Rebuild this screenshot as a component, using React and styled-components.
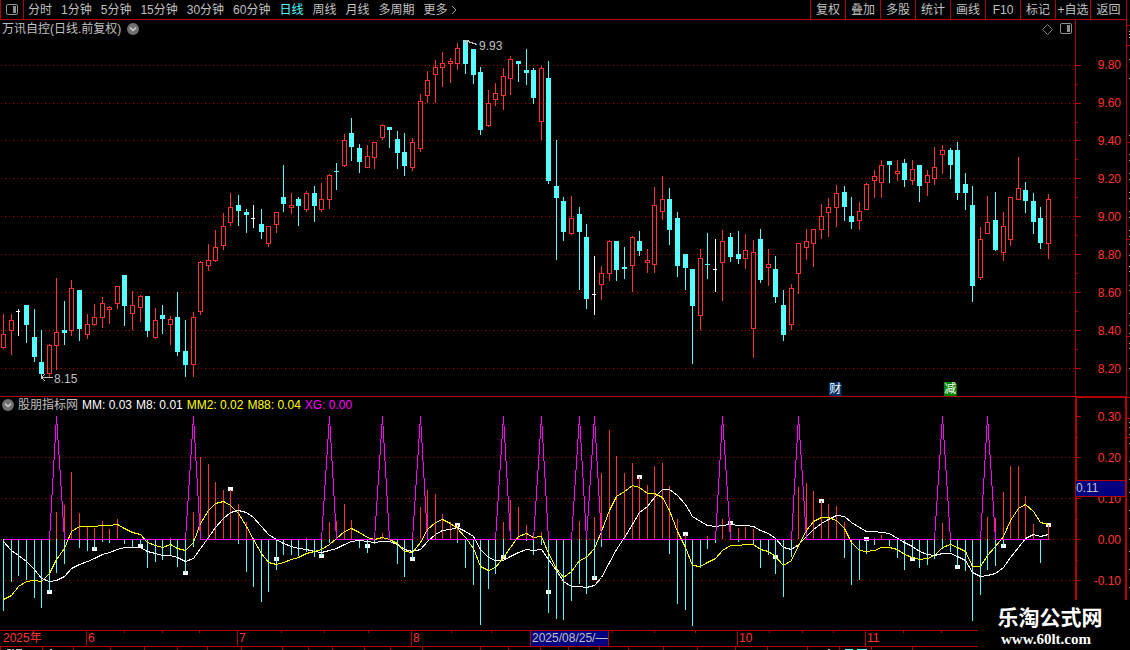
/*
 App.jsx: Daily K-line view of a stock terminal. Shows the period toolbar, the
 candle chart with its price axis, the indicator chart and the date axis.
 */

import React from 'react';
import styled, { createGlobalStyle } from 'styled-components';

const LINE = '#b40000';
const RED = '#ff3232';
const CYAN = '#54ffff';
const GREY = '#c0c0c0';

// - Data -

const PERIODS = ['分时', '1分钟', '5分钟', '15分钟', '30分钟', '60分钟', '日线', '周线', '月线', '多周期'];
const ACTIONS = ['复权', '叠加', '多股', '统计', '画线', 'F10', '标记', '+自选', '返回'];
const PRICES = ['9.80', '9.60', '9.40', '9.20', '9.00', '8.80', '8.60', '8.40', '8.20'];
const LEVELS = ['0.30', '0.20', '0.10', '0.00', '-0.10'];

const PRICE_ROWS = [65, 103, 140, 178, 216, 254, 292, 330, 368];
const PRICE_MINOR = [84, 122, 159, 197, 235, 273, 311, 349];
const LEVEL_ROWS = [416, 457, 498, 539, 580];
const LEVEL_MINOR = [437, 478, 519, 560];
const ZERO = 539;

const READINGS = [
  { text: 'MM: 0.03', color: '#ffffff' },
  { text: 'M8: 0.01', color: '#ffffff' },
  { text: 'MM2: 0.02', color: '#ffff00' },
  { text: 'M88: 0.04', color: '#ffff00' },
  { text: 'XG: 0.00', color: '#ff00ff' },
];

// September has no label of its own while the cursor date covers its start.
const DATES = [
  { text: '2025年', span: 86 },
  { text: '6', span: 151, divided: true },
  { text: '7', span: 174, divided: true },
  { text: '8', span: 119, divided: true },
  { text: '2025/08/25/—', span: 79, divided: true, active: true },
  { text: '', span: 128 },
  { text: '10', span: 128, divided: true },
  { text: '11', span: 261, divided: true },
];

// Each candle: kind (r = up, c = down, w = flat), high, body top, body bottom, low.
const CANDLES = `r 314 334 347 348|r 314 320 330 354|w 309 311 311 335|c 305 305 325 342|c 309 337 357 361
c 330 362 374 378|r 344 345 373 376|r 278 332 345 369|c 301 330 333 344|r 280 288 330 335
c 290 290 329 340|r 314 324 334 338|r 304 317 324 325|r 297 303 317 327|r 306 307 309 323
r 286 286 303 308|c 275 275 306 325|r 291 305 313 329|r 295 296 307 321|c 296 296 331 336
r 308 320 337 338|c 305 315 319 333|r 316 319 324 344|c 292 317 352 355|c 320 351 365 376
r 312 317 364 376|r 261 262 311 314|r 244 260 265 270|r 230 247 260 261|r 213 226 245 249
r 193 207 222 225|c 195 205 211 225|c 209 212 215 232|w 205 218 218 227|c 209 224 232 238
r 226 226 243 246|r 212 212 224 232|c 165 197 204 211|r 193 205 207 213|c 197 199 206 225
r 191 193 209 211|c 186 193 206 221|r 183 199 209 211|r 174 175 199 208|c 163 171 172 189
r 134 140 165 166|c 118 133 147 160|c 144 148 162 172|r 145 156 167 167|r 142 142 157 168
r 124 125 137 139|c 127 127 130 147|c 131 139 153 168|c 133 152 166 175|r 138 142 167 170
r 94 101 148 151|r 71 80 95 102|r 60 67 74 102|r 52 63 67 86|r 58 61 63 82
r 43 48 63 69|c 40 40 64 73|c 49 49 75 83|c 67 72 130 134|r 90 103 125 126
r 83 93 99 105|r 68 76 95 109|r 56 59 78 94|c 61 61 64 81|c 49 70 73 84
c 68 70 98 103|r 66 68 121 139|c 61 78 181 183|c 140 186 198 259|c 197 201 232 240
r 196 218 233 234|c 207 214 232 289|c 224 237 299 308|w 256 294 294 314|r 266 273 284 299
r 240 241 273 280|c 241 241 270 280|c 247 267 269 278|r 236 237 265 291|c 231 241 251 255
r 249 260 262 272|r 187 205 264 272|r 176 199 211 219|c 188 199 230 244|c 212 218 266 276
c 254 254 268 289|c 269 269 306 363|r 249 258 315 329|c 233 264 264 278|w 239 269 269 291
r 230 241 262 300|c 233 237 257 261|c 231 254 259 263|r 234 250 258 268|r 240 252 328 357
c 229 239 280 282|r 249 264 267 285|c 256 269 297 302|c 290 305 335 340|r 284 288 324 329
r 243 243 273 293|r 229 241 247 259|r 229 229 243 266|r 204 216 229 238|r 198 207 212 236
r 185 193 207 226|c 186 192 207 220|c 197 216 222 228|r 202 211 220 229|r 183 184 209 209
r 170 176 180 197|r 160 165 182 197|c 161 161 165 182|r 160 171 173 180|c 159 163 180 186
r 160 169 180 184|c 165 165 186 201|r 170 175 182 195|r 147 167 178 184|r 145 150 154 173
c 148 150 165 178|c 142 150 193 199|c 173 184 193 209|c 186 205 286 301|r 227 239 277 279
r 196 222 233 233|c 192 220 250 250|r 212 226 252 260|r 197 197 239 245|r 157 188 199 199
c 182 190 201 212|c 193 201 222 233|c 207 218 243 248|r 194 199 243 258`
  .split(/[|\n]/)
  .map((row) => {
    const [kind, ...values] = row.split(' ');
    const [high, top, bottom, low] = values.map(Number);
    return { kind, high, top, bottom, low };
  });

// Histogram ends above and below the zero row, 0 where there is no bar on that side.
const BARS = `0,611 0,582 0,576 0,580 0,598 0,608 0,592 512,573 505,564 472,0 513,548 527,551 528,549 521,542
529,543 519,0 0,544 0,547 0,546 0,568 0,562 0,560 538,556 0,567 0,573 512,547 457,0 464,0 482,0 490,0
490,0 504,544 522,572 538,587 0,602 0,592 0,570 0,555 0,555 0,556 538,552 0,557 0,556 522,543 521,0
504,0 520,0 0,548 0,553 0,544 533,0 0,0 0,564 0,577 0,559 507,0 490,0 494,0 514,0 522,0 525,543 0,568
0,585 0,625 0,589 0,574 522,557 500,0 507,0 525,541 0,555 532,545 0,613 0,619 0,620 0,601 521,584
0,594 517,578 473,547 430,0 456,0 473,0 463,0 477,0 485,0 466,0 463,0 486,554 519,604 535,610 0,626
0,568 536,549 0,543 519,0 523,0 528,542 527,0 529,544 0,568 0,555 0,574 0,597 0,557 487,0 483,0 491,0
501,0 504,0 506,0 522,558 0,585 0,580 0,554 538,545 535,0 0,546 0,558 0,570 0,559 0,568 0,565 0,559
523,549 0,552 0,567 0,571 0,621 0,595 517,570 518,566 492,546 466,0 466,0 496,0 524,0 0,563 525,0`
  .split(/\s+/)
  .map((pair) => pair.split(',').map(Number));

const SLOW = `541 550 555 561 569 578 581 580 576 568 564 561 558 554 552 549 547 547 547 551 553 555 555 557 561
558 548 537 527 518 512 510 512 517 526 534 539 543 546 548 549 551 552 550 548 544 541 540 541 542 541 541
544 549 551 549 541 534 530 529 527 531 536 549 557 560 560 556 552 549 550 549 559 570 581 586 586 587 585
577 562 549 537 524 512 506 497 489 489 495 504 516 521 525 526 525 524 525 525 526 530 533 538 547 549 544
536 529 523 519 515 516 522 527 531 531 532 533 538 542 546 551 554 555 553 553 556 560 572 576 575 573 567
557 547 538 534 536 534`.split(/\s+/).map(Number);

const FAST = `599 595 586 581 580 581 573 559 548 531 526 526 526 525 525 524 528 532 534 542 545 547 544 548 550
542 523 510 503 501 505 513 526 539 553 562 564 562 559 557 553 551 549 544 538 531 528 532 537 539 537 539
543 551 552 542 529 522 519 523 528 537 548 566 570 567 557 547 536 533 537 536 553 568 577 571 560 557 548
531 510 496 491 485 487 493 493 497 510 531 547 565 566 562 558 550 545 545 544 544 549 551 556 565 560 545
530 521 517 517 520 528 542 550 551 550 547 547 549 554 557 559 558 555 547 544 547 551 566 566 555 546 536
520 508 504 511 522 524`.split(/\s+/).map(Number);

const SIGNALS = [7, 25, 43, 50, 55, 66, 71, 76, 78, 95, 105, 124, 130];

const MARKERS = [
  [6, 592], [12, 549], [18, 546], [24, 573], [30, 489], [36, 559], [42, 556], [48, 546], [54, 559],
  [60, 525], [66, 557], [72, 592], [78, 578], [84, 477], [90, 534], [96, 523], [102, 557], [108, 501],
  [114, 539], [120, 559], [126, 567], [132, 546], [138, 525],
];

const DATE_TICKS = [124, 162, 199, 281, 324, 368, 451, 491, 612, 654, 695, 769, 802, 833, 903, 941];
const FOOT_TICKS = [
  0, 42, 73, 110, 144, 177, 207, 241, 282, 308, 332, 364, 390, 422, 480, 508, 540, 568, 599, 628, 663,
  697, 735, 767, 807, 839, 871, 912,
];
const STRIP_TICKS = [25, 45, 142, 239, 336, 397, 418, 437];
const STRIP_DOTS = [
  31, 34, 37, 59, 78, 135, 154, 160, 173, 179, 192, 198, 211, 217, 230, 236, 244, 255, 266, 271, 285,
  290, 313, 325, 333, 343, 348, 368, 422, 427, 434, 443, 461, 479, 492, 510, 528, 551, 569, 587,
];

// Left pixel column of the wick of a given day.
const dayX = (index) => Math.floor(3.76 + 7.57 * index);

const toPoints = (rows) => rows.map((y, i) => `${dayX(i) + 0.5},${y + 0.5}`).join(' ');

const signalPoints = toPoints(CANDLES.map((_, i) => (SIGNALS.includes(i) ? 416 : ZERO)));

// - Styled Components -

const GlobalStyle = createGlobalStyle`
  *, *::before, *::after {
    box-sizing: border-box;
  }

  body {
    margin: 0;
    background: #000;
    color: ${GREY};
    font: 12px/14px "Liberation Sans", "Noto Sans CJK SC", sans-serif;
  }
`;

const Page = styled.div`
  position: relative;
  display: grid;
  grid-template-columns: minmax(0, 1fr) 4px;
  height: 100vh;
  overflow: hidden;
`;

const Main = styled.main`
  display: grid;
  grid-template-rows: 20px minmax(0, 376fr) minmax(0, 234fr) 17px 3px;
  min-width: 0;
`;

const Toolbar = styled.header`
  display: flex;
  border: solid ${LINE};
  border-width: 0 0 1px 1px;
`;

const BareButton = styled.button`
  display: flex;
  align-items: center;
  justify-content: center;
  padding: 0;
  border: 0;
  background: none;
  color: inherit;
  font: inherit;
  white-space: nowrap;
  cursor: pointer;
`;

const LayoutButton = styled(BareButton)`
  width: 23px;
  border-right: 1px solid ${LINE};
`;

const Periods = styled.nav`
  display: flex;
  flex: 1;
  gap: 9px;
  padding-left: 4px;
`;

const PeriodButton = styled(BareButton)`
  gap: 3px;
  color: ${(props) => (props.$active ? CYAN : GREY)};
`;

const ActionButton = styled(BareButton)`
  width: 35px;
  border-left: 1px solid ${LINE};

  &:last-child {
    width: 36px;
  }
`;

const ChartRow = styled.section`
  display: grid;
  grid-template-columns: minmax(0, 1fr) 51px;
  min-height: 0;
`;

// Stacks its children in one cell, so that headings lie over the drawing.
const Plot = styled.div`
  position: relative;
  display: grid;
  min-width: 0;
  min-height: 0;

  > * {
    grid-area: 1 / 1;
  }
`;

const Canvas = styled.svg`
  display: block;
  width: 100%;
  height: 100%;
  min-height: 0;
  overflow: hidden;
  shape-rendering: crispEdges;

  text {
    fill: ${GREY};
  }
`;

const ChartHead = styled.div`
  z-index: 1;
  display: flex;
  align-self: start;
  align-items: center;
  gap: ${(props) => props.$gap}px;
  height: 18px;
  padding: 0 3px 0 2px;
  white-space: nowrap;
`;

const ChartTitle = styled.h1`
  margin: 0;
  font: inherit;
`;

const HeadTools = styled.div`
  display: flex;
  gap: 7px;
  margin-left: auto;
`;

const Reading = styled.span`
  color: ${(props) => props.$color};
`;

const EventTag = styled.span`
  position: absolute;
  bottom: 0;
  left: ${(props) => props.$left}%;
  width: 13px;
  height: 14px;
  background: ${(props) => props.$fill};
  clip-path: polygon(0 0, 11px 0, 100% 2px, 100% 100%, 0 100%);
  color: #fff;
  text-align: center;
`;

const AxisLabels = styled.ol`
  display: grid;
  grid-template-rows: ${(props) => props.$rows};
  align-items: center;
  margin: 0;
  padding: 0 5px 0 0;
  list-style: none;
  color: ${RED};
  text-align: right;
`;

const AxisFlag = styled.output`
  position: absolute;
  top: 36%;
  right: 1px;
  left: 1px;
  height: 17px;
  border: solid ${LINE};
  border-width: 1px 0;
  background: #000080;
  line-height: 15px;
`;

const DateAxis = styled.footer`
  position: relative;
  display: grid;
  grid-template-columns: ${(props) => props.$columns};
  border: solid ${LINE};
  border-width: 1px 0;
  color: ${RED};
`;

const DateCell = styled.span`
  padding-left: ${(props) => (props.$divided ? 1 : 3)}px;
  border-left: ${(props) => (props.$divided ? `1px solid ${LINE}` : 0)};
  border-right: ${(props) => (props.$active ? `1px solid ${LINE}` : 0)};
  background: ${(props) => (props.$active ? '#000080' : 'none')};
  color: ${(props) => (props.$active ? GREY : RED)};
  line-height: 15px;
  white-space: nowrap;
`;

const TickLayer = styled(Canvas)`
  position: absolute;
  top: 0;
  left: 0;
  height: 2px;
`;

const SiteMark = styled.a`
  position: absolute;
  right: 0;
  bottom: 0;
  width: 152px;
  height: 50px;
  padding: 4px 8px 0 0;
  background: #000;
  color: #fff;
  text-align: center;
  text-decoration: none;
`;

const SiteName = styled.strong`
  display: block;
  font: bold 21px/25px "Noto Sans CJK SC", sans-serif;
`;

const SiteUrl = styled.span`
  display: block;
  padding-right: 8px;
  font: bold 15px/20px "Liberation Serif", serif;
`;

// - Icons -

const PanelIcon = () => (
  <svg width="12" height="12" viewBox="0 0 12 12" fill="none" stroke="#909090" aria-hidden="true">
    <rect x="0.5" y="0.5" width="11" height="10" rx="1.5" />
    <path d="M7 2h3v7H7z" fill="#909090" stroke="none" />
  </svg>
);

const DiamondIcon = () => (
  <svg width="11" height="11" viewBox="0 0 11 11" fill="none" stroke="#808080" aria-hidden="true">
    <path d="M5.5 0.5l5 5-5 5-5-5z" />
  </svg>
);

const ChevronIcon = () => (
  <svg width="6" height="10" viewBox="0 0 6 10" fill="none" stroke="#a0a0a0" aria-hidden="true">
    <path d="M1 1l4 4-4 4" />
  </svg>
);

const DropIcon = () => (
  <svg width="12" height="12" viewBox="0 0 12 12" aria-hidden="true">
    <circle cx="6" cy="6" r="6" fill="#707070" />
    <path d="M3 4.5l3 3 3-3" fill="none" stroke="#d0d0d0" strokeWidth="1.5" />
  </svg>
);

// - Chart parts -

const GridLines = ({ rows }) =>
  rows.map((y) => (
    <line key={y} x1="1" x2="1075" y1={y + 0.5} y2={y + 0.5} stroke={LINE} strokeDasharray="1 3" />
  ));

const Candle = ({ index, kind, high, top, bottom, low }) => {
  const x = dayX(index);
  const color = { r: RED, c: CYAN, w: '#ffffff' }[kind];

  if (kind !== 'r') {
    return (
      <g fill={color}>
        <rect x={x} y={high} width="1" height={low - high + 1} />
        <rect x={x - 2} y={top} width={kind === 'w' ? 4 : 5} height={Math.max(1, bottom - top)} />
      </g>
    );
  }
  return (
    <g fill={color}>
      <rect x={x} y={high} width="1" height={Math.max(0, top - high)} />
      <rect x={x} y={bottom} width="1" height={low - bottom + 1} />
      <rect x={x - 1.5} y={top + 0.5} width="4" height={Math.max(2, bottom - top)} fill="none" stroke={color} />
    </g>
  );
};

const AxisFrame = ({ y, height, major, minor, heavy }) => (
  <Canvas viewBox={`1075 ${y} 51 ${height}`} preserveAspectRatio="none" fill={LINE} aria-hidden="true">
    <rect x="1075" y={y} width={heavy ? 2 : 1} height={height} />
    {heavy && <rect x="1125" y={y} width="1" height={height} />}
    {heavy && <rect x="1075" y={y} width="51" height="2" />}
    {major.map((row) => <rect key={row} x="1076" y={row} width="5" height="1" />)}
    {minor.map((row) => <rect key={row} x="1076" y={row} width="2" height="1" />)}
  </Canvas>
);

const PriceChart = () => (
  <ChartRow>
    <Plot>
      <Canvas viewBox="0 20 1075 376" preserveAspectRatio="none" role="img" aria-label="日线">
        <GridLines rows={PRICE_ROWS} />
        {CANDLES.map((candle, i) => <Candle key={i} index={i} {...candle} />)}
        <g fill="none" stroke={GREY}>
          <path d="M41 377.5h12M41 377.5l4-3M41 377.5l4 3" />
          <path d="M465 40.5l12 4M465 40.5h4M465 40.5l2 4" />
        </g>
        <text x="54" y="383">8.15</text>
        <text x="479" y="50">9.93</text>
      </Canvas>
      <ChartHead $gap={6}>
        <ChartTitle>万讯自控(日线.前复权)</ChartTitle>
        <BareButton aria-label="选项"><DropIcon /></BareButton>
        <HeadTools>
          <BareButton aria-label="标注"><DiamondIcon /></BareButton>
          <BareButton aria-label="侧栏"><PanelIcon /></BareButton>
        </HeadTools>
      </ChartHead>
      <EventTag $left={77.1} $fill="#003068">财</EventTag>
      <EventTag $left={87.8} $fill="#008000">减</EventTag>
    </Plot>
    <Plot>
      <AxisFrame y={20} height={376} major={PRICE_ROWS} minor={PRICE_MINOR} />
      <AxisLabels $rows="26fr repeat(9, 38fr) 8fr">
        <li aria-hidden="true" />
        {PRICES.map((price) => <li key={price}>{price}</li>)}
      </AxisLabels>
    </Plot>
  </ChartRow>
);

const IndicatorChart = () => (
  <ChartRow>
    <Plot>
      <Canvas viewBox="0 396 1075 234" preserveAspectRatio="none" role="img" aria-label="股朋指标网">
        <rect x="0" y="396" width="1075" height="1" fill={LINE} />
        <GridLines rows={LEVEL_ROWS.slice(1)} />
        {MARKERS.map(([day, y]) => (
          <rect key={day} x={dayX(day) - 2} y={y - 2} width="5" height="4" fill="#ffffff" />
        ))}
        {BARS.map(([up, down], i) => (
          <g key={i}>
            {up > 0 && <rect x={dayX(i)} y={up} width="1" height={ZERO - up} fill={RED} />}
            {down > 0 && <rect x={dayX(i)} y={ZERO} width="1" height={down - ZERO} fill={CYAN} />}
          </g>
        ))}
        <g fill="none">
          <polyline points={toPoints(SLOW)} stroke="#ffffff" />
          <polyline points={toPoints(FAST)} stroke="#ffff00" />
          <polyline points={signalPoints} stroke="#ff00ff" />
        </g>
      </Canvas>
      <ChartHead $gap={4}>
        <BareButton aria-label="指标选项"><DropIcon /></BareButton>
        <span>股朋指标网</span>
        {READINGS.map(({ text, color }) => <Reading key={text} $color={color}>{text}</Reading>)}
      </ChartHead>
    </Plot>
    <Plot>
      <AxisFrame y={396} height={234} major={LEVEL_ROWS} minor={LEVEL_MINOR} heavy />
      <AxisLabels $rows="repeat(5, 41fr) 29fr">
        {LEVELS.map((level) => <li key={level}>{level}</li>)}
      </AxisLabels>
      <AxisFlag>0.11</AxisFlag>
    </Plot>
  </ChartRow>
);

const App = () => (
  <Page>
    <GlobalStyle />
    <Main>
      <Toolbar>
        <LayoutButton aria-label="布局"><PanelIcon /></LayoutButton>
        <Periods>
          {PERIODS.map((name) => (
            <PeriodButton key={name} $active={name === '日线'}>{name}</PeriodButton>
          ))}
          <PeriodButton>更多 <ChevronIcon /></PeriodButton>
        </Periods>
        {ACTIONS.map((name) => <ActionButton key={name}>{name}</ActionButton>)}
      </Toolbar>
      <PriceChart />
      <IndicatorChart />
      <DateAxis $columns={DATES.map(({ span }) => `minmax(0, ${span}fr)`).join(' ')}>
        {DATES.map(({ text, divided, active }) => (
          <DateCell key={text} $divided={divided} $active={active}>{text}</DateCell>
        ))}
        <TickLayer viewBox="0 0 1126 2" preserveAspectRatio="none" fill={LINE} aria-hidden="true">
          {DATE_TICKS.map((x) => <rect key={x} x={x} y="0" width="1" height="2" />)}
        </TickLayer>
      </DateAxis>
      <Canvas viewBox="0 0 1126 3" preserveAspectRatio="none" fill={LINE} aria-hidden="true">
        {FOOT_TICKS.map((x) => <rect key={x} x={x} y="0" width="1" height="3" />)}
        <path d="M7 2h4v1H7zM12 2h2v1h-2zM16 2h6v1h-6zM50 2h2v1h-2zM828 2h2v1h-2z" fill={GREY} />
        <path d="M845 2h8v1h-8zM857 2h10v1h-10z" fill={CYAN} />
      </Canvas>
    </Main>
    <Canvas viewBox="1126 0 4 650" preserveAspectRatio="none" fill={LINE} aria-hidden="true">
      <rect x="1126" y="0" width="1" height="650" />
      {STRIP_TICKS.map((y) => <rect key={y} x="1127" y={y} width="3" height="1" />)}
      {STRIP_DOTS.map((y) => <rect key={y} x="1129" y={y} width="1" height="1" fill={GREY} />)}
    </Canvas>
    <SiteMark href="#">
      <SiteName>乐淘公式网</SiteName>
      <SiteUrl>www.60lt.com</SiteUrl>
    </SiteMark>
  </Page>
);

export default App;
